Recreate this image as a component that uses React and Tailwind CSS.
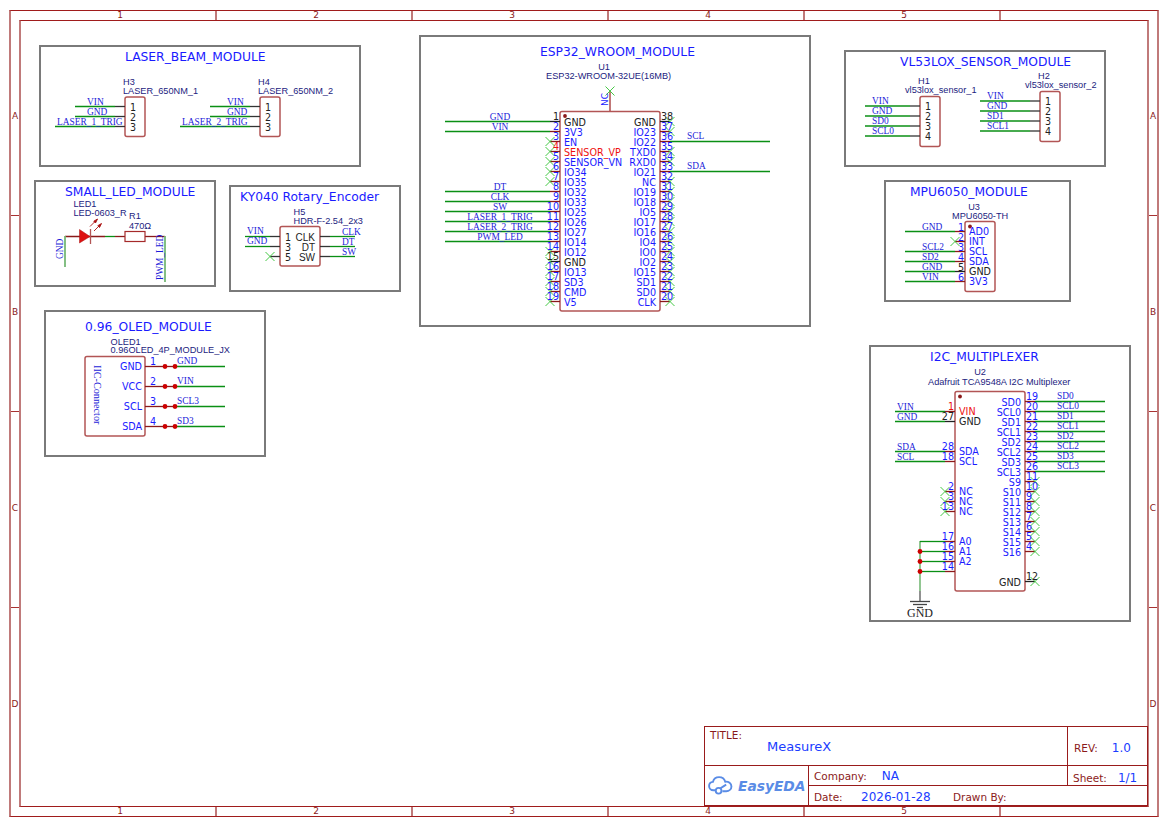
import React from "react";

const BLUE = "#1a1aff";
const NET = "#1c1cd8";
const NAME = "#1c1c80";
const WIRE = "#0a8f14";
const PIN = "#8b1a1a";
const BODY = "#b25555";
const NC = "#45c945";
const SANS = "'DejaVu Sans', sans-serif";
const ARIAL = "'Liberation Sans', sans-serif";
const SERIF = "'Liberation Serif', serif";

const modules = [
  { title: "LASER_BEAM_MODULE", box: "left-[39px] top-[45px] w-[322px] h-[122px] pt-[1px]", text: "pl-[84px]" },
  { title: "SMALL_LED_MODULE", box: "left-[34px] top-[180px] w-[182px] h-[107px] pt-[1px]", text: "pl-[29px]" },
  { title: "KY040 Rotary_Encoder", box: "left-[229px] top-[185px] w-[172px] h-[107px] pt-[1px]", text: "pl-[9px]" },
  { title: "0.96_OLED_MODULE", box: "left-[44px] top-[310px] w-[222px] h-[147px] pt-[6px]", text: "pl-[39px]" },
  { title: "ESP32_WROOM_MODULE", box: "left-[419px] top-[35px] w-[392px] h-[292px] pt-[6px]", text: "pl-[119px]" },
  { title: "VL53LOX_SENSOR_MODULE", box: "left-[844px] top-[50px] w-[262px] h-[117px] pt-[1px]", text: "pl-[54px]" },
  { title: "MPU6050_MODULE", box: "left-[884px] top-[180px] w-[187px] h-[122px] pt-[1px]", text: "pl-[24px]" },
  { title: "I2C_MULTIPLEXER", box: "left-[869px] top-[345px] w-[262px] h-[277px] pt-[1px]", text: "pl-[59px]" },
];

function Txt({ x, y, children, font = SANS, size = 9.6, color = BLUE, anchor = "start", rotate, weight }) {
  return (
    <text
      x={x}
      y={y}
      fontFamily={font}
      fontSize={size}
      fill={color}
      textAnchor={anchor}
      fontWeight={weight}
      transform={rotate ? `rotate(${rotate} ${x} ${y})` : undefined}
    >
      {children}
    </text>
  );
}

const Net = (props) => <Txt font={SERIF} size={9.4} color={NET} {...props} />;
const Part = (props) => <Txt font={ARIAL} size={9.2} color={NAME} {...props} />;

function Line({ x1, y1, x2, y2, color = WIRE, w = 1.3 }) {
  return <line x1={x1} y1={y1} x2={x2} y2={y2} stroke={color} strokeWidth={w} />;
}

function Cross({ x, y }) {
  return (
    <g stroke={NC} strokeWidth="1">
      <line x1={x - 4.5} y1={y - 4.5} x2={x + 4.5} y2={y + 4.5} />
      <line x1={x - 4.5} y1={y + 4.5} x2={x + 4.5} y2={y - 4.5} />
    </g>
  );
}

function Body({ x, y, w, h }) {
  return <rect x={x} y={y} width={w} height={h} rx="2" fill="#fff" stroke={BODY} strokeWidth="1.5" />;
}

const Dot = ({ x, y, r = 2.4, color = "#cc0000" }) => <circle cx={x} cy={y} r={r} fill={color} />;

function Header({ x, y, pins, from, long, labels, name, part, nameX, partX, stubColor = "#333", labelX }) {
  return (
    <g>
      {pins.map((n, i) => {
        const py = y + 10 + i * 10;
        const start = long && i === pins.length - 1 ? long : from;
        return (
          <g key={n}>
            <Line x1={start} y1={py} x2={x - 10} y2={py} />
            <Line x1={x - 10} y1={py} x2={x} y2={py} color={stubColor} />
            <Net x={i === pins.length - 1 && long ? long + 2 : labelX} y={py - 2}>{labels[i]}</Net>
            <Txt x={x + 5} y={py + 4} color="#222">{n}</Txt>
          </g>
        );
      })}
      <Part x={nameX} y={y - 12}>{name}</Part>
      <Part x={partX} y={y - 3}>{part}</Part>
    </g>
  );
}

function Laser() {
  return (
    <g>
      <Body x={125} y={97} w={20} h={39.5} />
      <Body x={260} y={97} w={20} h={39.5} />
      <Header x={125} y={96.5} pins={[1, 2, 3]} from={75} long={55} labels={["VIN", "GND", "LASER_1_TRIG"]} name="H3" part="LASER_650NM_1" nameX={123} partX={123} labelX={87} />
      <Header x={260} y={96.5} pins={[1, 2, 3]} from={210} long={180} labels={["VIN", "GND", "LASER_2_TRIG"]} name="H4" part="LASER_650NM_2" nameX={258} partX={258} labelX={227} />
    </g>
  );
}

function Led() {
  return (
    <g>
      <Line x1={65} y1={236.5} x2={105} y2={236.5} color={PIN} />
      <Line x1={105} y1={236.5} x2={115} y2={236.5} />
      <Line x1={115} y1={236.5} x2={125} y2={236.5} color={PIN} />
      <Line x1={145} y1={236.5} x2={165} y2={236.5} color={PIN} />
      <polygon points="79.5,229.5 90,236.5 79.5,243" fill="#dd1111" stroke="#aa1111" strokeWidth="0.5" />
      <Line x1={90.5} y1={229} x2={90.5} y2={244} color={BODY} w={1.3} />
      <g stroke="#aa1111" strokeWidth="0.9" fill="#aa1111">
        <line x1={90} y1={226.5} x2={96} y2={220.5} />
        <polygon points="97.5,219 95.5,223 93.8,221.2" />
        <line x1={94} y1={231} x2={100} y2={225} />
        <polygon points="101.5,223.5 99.5,227.5 97.8,225.7" />
      </g>
      <rect x={125} y={231.5} width={20} height={10} fill="#fff" stroke="#a52a2a" strokeWidth="1.2" />
      <Line x1={65} y1={236} x2={65} y2={267} color="#76b876" w={1.8} />
      <Line x1={165} y1={236} x2={165} y2={282} color="#76b876" w={1.8} />
      <Net x={63} y={259} rotate={-90}>GND</Net>
      <Net x={163} y={280} rotate={-90}>PWM_LED</Net>
      <Part x={73.5} y={207}>LED1</Part>
      <Part x={73.5} y={216}>LED-0603_R</Part>
      <Part x={129} y={219}>R1</Part>
      <Part x={129} y={229}>470Ω</Part>
    </g>
  );
}

function Encoder() {
  const rows = [
    [1, "CLK", "CLK"],
    [3, "DT", "DT"],
    [5, "SW", "SW"],
  ];
  return (
    <g>
      <Body x={280} y={226.5} w={40} h={39.5} />
      {rows.map(([n, pin, net], i) => {
        const y = 236.5 + i * 10;
        return (
          <g key={n}>
            {i < 2 && <Line x1={245} y1={y} x2={270} y2={y} />}
            <Line x1={270} y1={y} x2={280} y2={y} color="#333" />
            <Line x1={320} y1={y} x2={330} y2={y} color="#333" />
            <Line x1={330} y1={y} x2={355} y2={y} />
            <Txt x={285} y={y + 4} color="#222">{n}</Txt>
            <Txt x={315} y={y + 4} font={ARIAL} color="#222" anchor="end" size={10}>{pin}</Txt>
            <Net x={342} y={y - 2}>{net}</Net>
          </g>
        );
      })}
      <Cross x={270} y={256.5} />
      <Net x={247} y={234}>VIN</Net>
      <Net x={247} y={244}>GND</Net>
      <Part x={293.5} y={215}>H5</Part>
      <Part x={293.5} y={224}>HDR-F-2.54_2x3</Part>
    </g>
  );
}

function Oled() {
  const rows = [
    ["GND", 1, "GND"],
    ["VCC", 2, "VIN"],
    ["SCL", 3, "SCL3"],
    ["SDA", 4, "SD3"],
  ];
  return (
    <g>
      <Body x={85} y={356.5} w={60} h={79.5} />
      <Net x={94} y={365} rotate={90} size={10.2}>IIC-Connector</Net>
      {rows.map(([pin, n, net], i) => {
        const y = 366.5 + i * 20;
        return (
          <g key={n}>
            <Line x1={145} y1={y} x2={175} y2={y} color={PIN} />
            <Line x1={175} y1={y} x2={225} y2={y} />
            <Dot x={165} y={y} />
            <Dot x={175} y={y} />
            <Txt x={142} y={y + 3.5} anchor="end">{pin}</Txt>
            <Txt x={150} y={y - 2}>{n}</Txt>
            <Net x={177} y={y - 3}>{net}</Net>
          </g>
        );
      })}
      <Part x={110.5} y={345}>OLED1</Part>
      <Part x={110.5} y={353}>0.96OLED_4P_MODULE_JX</Part>
    </g>
  );
}

const espLeft = ["GND", "3V3", "EN", "SENSOR_VP", "SENSOR_VN", "IO34", "IO35", "IO32", "IO33", "IO25", "IO26", "IO27", "IO14", "IO12", "GND", "IO13", "SD3", "CMD", "V5"];
const espRight = ["GND", "IO23", "IO22", "TXD0", "RXD0", "IO21", "NC", "IO19", "IO18", "IO5", "IO17", "IO16", "IO4", "IO0", "IO2", "IO15", "SD1", "SD0", "CLK"];
const espNets = { 0: "GND", 1: "VIN", 7: "DT", 8: "CLK", 9: "SW", 10: "LASER_1_TRIG", 11: "LASER_2_TRIG", 12: "PWM_LED" };
const espNetsRight = { 2: "SCL", 5: "SDA" };

function pinColor(name) {
  if (name === "GND") return "#222";
  if (name === "SENSOR_VP") return "#ee1111";
  return BLUE;
}

function Esp() {
  return (
    <g>
      <Line x1={610} y1={91} x2={610} y2={111} color={BODY} w={1.6} />
      <Cross x={610} y={91} />
      <Txt x={608} y={106} rotate={-90} size={9}>NC</Txt>
      <Body x={560} y={111.5} w={100} h={199.5} />
      <Dot x={565} y={116} r={1.9} color="#8b1a1a" />
      {espLeft.map((name, i) => {
        const y = 121.5 + i * 10;
        const col = pinColor(name);
        const stub = name === "GND" ? "#222" : PIN;
        return (
          <g key={i}>
            <Line x1={550} y1={y} x2={560} y2={y} color={stub} />
            {espNets[i] ? <Line x1={445} y1={y} x2={550} y2={y} /> : <Cross x={550} y={y} />}
            <Txt x={559} y={y - 2} anchor="end" color={col}>{i + 1}</Txt>
            <Txt x={564} y={y + 4} color={col}>{name}</Txt>
            {espNets[i] && <Net x={500} y={y - 2} anchor="middle">{espNets[i]}</Net>}
          </g>
        );
      })}
      {espRight.map((name, i) => {
        const y = 121.5 + i * 10;
        const col = pinColor(name);
        return (
          <g key={i}>
            <Line x1={660} y1={y} x2={670} y2={y} color={name === "GND" ? "#222" : PIN} />
            {espNetsRight[i] ? <Line x1={670} y1={y} x2={770} y2={y} /> : <Cross x={670} y={y} />}
            <Txt x={661} y={y - 2} color={col}>{38 - i}</Txt>
            <Txt x={656} y={y + 4} anchor="end" color={col}>{name}</Txt>
            {espNetsRight[i] && <Net x={687} y={y - 3}>{espNetsRight[i]}</Net>}
          </g>
        );
      })}
      <Part x={604} y={70} anchor="middle">U1</Part>
      <Part x={546} y={79}>ESP32-WROOM-32UE(16MB)</Part>
    </g>
  );
}

function Sensors() {
  return (
    <g>
      <Body x={920} y={96.5} w={20} h={50} />
      <Body x={1040} y={91.5} w={20} h={50} />
      <Header x={920} y={96} pins={[1, 2, 3, 4]} from={865} labels={["VIN", "GND", "SD0", "SCL0"]} name="H1" part="vl53lox_sensor_1" nameX={918} partX={905} labelX={872} />
      <Header x={1040} y={91} pins={[1, 2, 3, 4]} from={980} labels={["VIN", "GND", "SD1", "SCL1"]} name="H2" part="vl53lox_sensor_2" nameX={1038} partX={1025} labelX={987} />
    </g>
  );
}

function Mpu() {
  const rows = [
    ["AD0", "GND"],
    ["INT", null],
    ["SCL", "SCL2"],
    ["SDA", "SD2"],
    ["GND", "GND"],
    ["3V3", "VIN"],
  ];
  return (
    <g>
      <Body x={965} y={221.5} w={30} h={70} />
      <Dot x={970} y={226.5} r={1.9} color="#8b1a1a" />
      {rows.map(([pin, net], i) => {
        const y = 231.5 + i * 10;
        const col = pin === "GND" ? "#222" : BLUE;
        return (
          <g key={pin}>
            <Line x1={955} y1={y} x2={965} y2={y} color={pin === "GND" ? "#222" : PIN} />
            {net ? <Line x1={905} y1={y} x2={955} y2={y} /> : <Cross x={955} y={y} />}
            <Txt x={964} y={y - 1} anchor="end" color={col}>{i + 1}</Txt>
            <Txt x={969} y={y + 3.5} color={col}>{pin}</Txt>
            {net && <Net x={922} y={y - 2}>{net}</Net>}
          </g>
        );
      })}
      <Part x={974} y={210} anchor="middle">U3</Part>
      <Part x={952} y={219}>MPU6050-TH</Part>
    </g>
  );
}

const muxLeft = [
  { y: 411, pin: "VIN", n: 1, net: "VIN", color: "#ee1111" },
  { y: 421, pin: "GND", n: 27, net: "GND", color: "#222" },
  { y: 451, pin: "SDA", n: 28, net: "SDA" },
  { y: 461, pin: "SCL", n: 18, net: "SCL" },
  { y: 491, pin: "NC", n: 2, cross: true },
  { y: 501, pin: "NC", n: 3, cross: true },
  { y: 511, pin: "NC", n: 13, cross: true },
  { y: 541, pin: "A0", n: 17, tie: true },
  { y: 551, pin: "A1", n: 16, tie: true },
  { y: 561, pin: "A2", n: 15, tie: true },
  { y: 571, pin: "", n: 14, tie: true },
];
const muxRight = ["SD0", "SCL0", "SD1", "SCL1", "SD2", "SCL2", "SD3", "SCL3", "S9", "S10", "S11", "S12", "S13", "S14", "S15", "S16"];
const muxRightNums = [19, 20, 21, 22, 23, 24, 25, 26, 11, 10, 9, 8, 7, 6, 5, 4];

function Mux() {
  return (
    <g>
      <Body x={955} y={391.5} w={70} h={199.5} />
      <Dot x={960} y={396.5} r={1.9} color="#8b1a1a" />
      <Line x1={920} y1={541} x2={920} y2={591} color="#76b876" w={1.6} />
      <Line x1={920} y1={591} x2={920} y2={601} color="#555" />
      <Line x1={910} y1={601.5} x2={930} y2={601.5} color="#444" />
      <Line x1={913} y1={604.5} x2={927} y2={604.5} color="#444" />
      <Line x1={917} y1={607.5} x2={923} y2={607.5} color="#444" />
      <Txt x={920} y={616.5} anchor="middle" font={SERIF} size={12} color="#222">GND</Txt>
      {muxLeft.map((r) => {
        const y = r.y + 0.5;
        const col = r.color || BLUE;
        return (
          <g key={r.n}>
            {r.tie && <Line x1={920} y1={y} x2={945} y2={y} />}
            <Line x1={945} y1={y} x2={955} y2={y} color={r.n === 27 ? "#222" : PIN} />
            {r.net && <Line x1={895} y1={y} x2={945} y2={y} />}
            {r.cross && <Cross x={945} y={y} />}
            <Txt x={954} y={y - 2} anchor="end" color={col}>{r.n}</Txt>
            <Txt x={959} y={y + 3.5} color={col}>{r.pin}</Txt>
            {r.net && <Net x={897} y={y - 2}>{r.net}</Net>}
            {r.tie && r.n !== 17 && <Dot x={920} y={y} />}
          </g>
        );
      })}
      {muxRight.map((pin, i) => {
        const y = 401.5 + i * 10;
        return (
          <g key={pin}>
            <Line x1={1025} y1={y} x2={1035} y2={y} color={PIN} />
            {i < 8 ? <Line x1={1035} y1={y} x2={1105} y2={y} /> : <Cross x={1035} y={y} />}
            <Txt x={1026} y={y - 2}>{muxRightNums[i]}</Txt>
            <Txt x={1021} y={y + 4} anchor="end">{pin}</Txt>
            {i < 8 && <Net x={1057} y={y - 3}>{pin}</Net>}
          </g>
        );
      })}
      <Line x1={1025} y1={581.5} x2={1035} y2={581.5} color="#222" />
      <Cross x={1035} y={581.5} />
      <Txt x={1026} y={579.5} color="#222">12</Txt>
      <Txt x={1021} y={585.5} anchor="end" color="#222">GND</Txt>
      <Part x={980} y={375} anchor="middle">U2</Part>
      <Part x={928} y={385}>Adafruit TCA9548A I2C Multiplexer</Part>
    </g>
  );
}

function Ruler() {
  return (
    <div className="flex h-[9px] pl-[10px] text-[9px] leading-[9px] text-[#8b1a1a]">
      {[1, 2, 3, 4, 5].map((n) => (
        <div key={n} className="w-[196px] shrink-0 border-r-2 border-[#c07a7a] pl-[4px] text-center">
          {n}
        </div>
      ))}
    </div>
  );
}

function SideRuler() {
  return (
    <div className="w-[8px] shrink-0 text-[9px] text-[#8b1a1a]">
      {["A", "B", "C"].map((l) => (
        <div key={l} className="flex h-[196px] items-center justify-center border-b border-[#a83232] pb-[2px]">
          {l}
        </div>
      ))}
      <div className="flex h-[194px] items-center justify-center">D</div>
    </div>
  );
}

function EasyLogo() {
  return (
    <div className="flex h-full items-center gap-[5px] pl-[3px]">
      <svg width="25" height="19" viewBox="0 0 26 20" fill="none" stroke="#5a8ce6" strokeWidth="2">
        <path d="M8 15H5.5C3 15 1 13 1 10.5C1 8.2 2.8 6.4 5 6.2C5.8 3.2 8.4 1.2 11.5 1.2C14.6 1.2 17.2 3.2 18 6C21.5 5.6 24.5 8 24.5 11C24.5 14 22 16 19 16H15" />
        <circle cx="11" cy="15.5" r="3" />
        <path d="M13 13C15 11.5 17 10 19 9" />
      </svg>
      <span className="text-[13.8px] leading-[18px] font-bold italic text-[#5a8ce6]">EasyEDA</span>
    </div>
  );
}

function TitleBlock() {
  return (
    <div className="-mr-px flex h-[80px] w-[444px] flex-col border border-[#991b1b] bg-white font-['DejaVu_Sans'] text-[10.5px] leading-[14px] text-[#8b1a1a]">
      <div className="flex h-[39px] shrink-0 border-b border-[#991b1b]">
        <div className="flex-1 pl-[5px] pt-[3px]">
          <div className="leading-[10px]">TITLE:</div>
          <div className="pl-[57px] text-[13px] text-[#1a3cff]">MeasureX</div>
        </div>
        <div className="flex w-[80px] items-end gap-[14px] border-l border-[#991b1b] pb-[10px] pl-[6px]">
          <span>REV:</span>
          <span className="text-[12px] text-[#1a3cff]">1.0</span>
        </div>
      </div>
      <div className="flex min-h-0 flex-1">
        <div className="w-[104px] border-r border-[#991b1b]">
          <EasyLogo />
        </div>
        <div className="flex flex-1 flex-col">
          <div className="flex h-[20px] shrink-0 border-b border-[#991b1b]">
            <div className="flex flex-1 items-center gap-[15px] pl-[5px]">
              <span>Company:</span>
              <span className="text-[12px] text-[#1a3cff]">NA</span>
            </div>
            <div className="flex w-[80px] items-center gap-[11px] border-l border-[#991b1b] pl-[5px] pt-[4px]">
              <span>Sheet:</span>
              <span className="text-[12px] text-[#1a3cff]">1/1</span>
            </div>
          </div>
          <div className="flex flex-1 items-center pl-[5px] pt-[3px]">
            <span className="w-[47px]">Date:</span>
            <span className="w-[92px] text-[12px] text-[#1a3cff]">2026-01-28</span>
            <span>Drawn By:</span>
          </div>
        </div>
      </div>
    </div>
  );
}

export default function App() {
  return (
    <div className="relative h-[827px] w-[1169px] overflow-hidden bg-white pl-[9px] pt-[10px] font-['DejaVu_Sans']">
      <div className="flex h-[807px] w-[1150px] flex-col border-x-2 border-y border-x-[#c07a7a] border-y-[#a01c1c]">
        <Ruler />
        <div className="flex flex-1">
          <SideRuler />
          <div className="flex w-[1130px] shrink-0 items-end justify-end border-x-2 border-y border-x-[#c07a7a] border-y-[#a01c1c]">
            <TitleBlock />
          </div>
          <SideRuler />
        </div>
        <Ruler />
      </div>

      {modules.map((m) => (
        <div key={m.title} className={`absolute border-2 border-[#7a7a7a] ${m.box} ${m.text} text-[12.3px] text-[#1a1aff]`}>
          {m.title}
        </div>
      ))}

      <svg className="absolute left-0 top-0" width="1169" height="827" viewBox="0 0 1169 827">
        <Laser />
        <Led />
        <Encoder />
        <Oled />
        <Esp />
        <Sensors />
        <Mpu />
        <Mux />
      </svg>
    </div>
  );
}
